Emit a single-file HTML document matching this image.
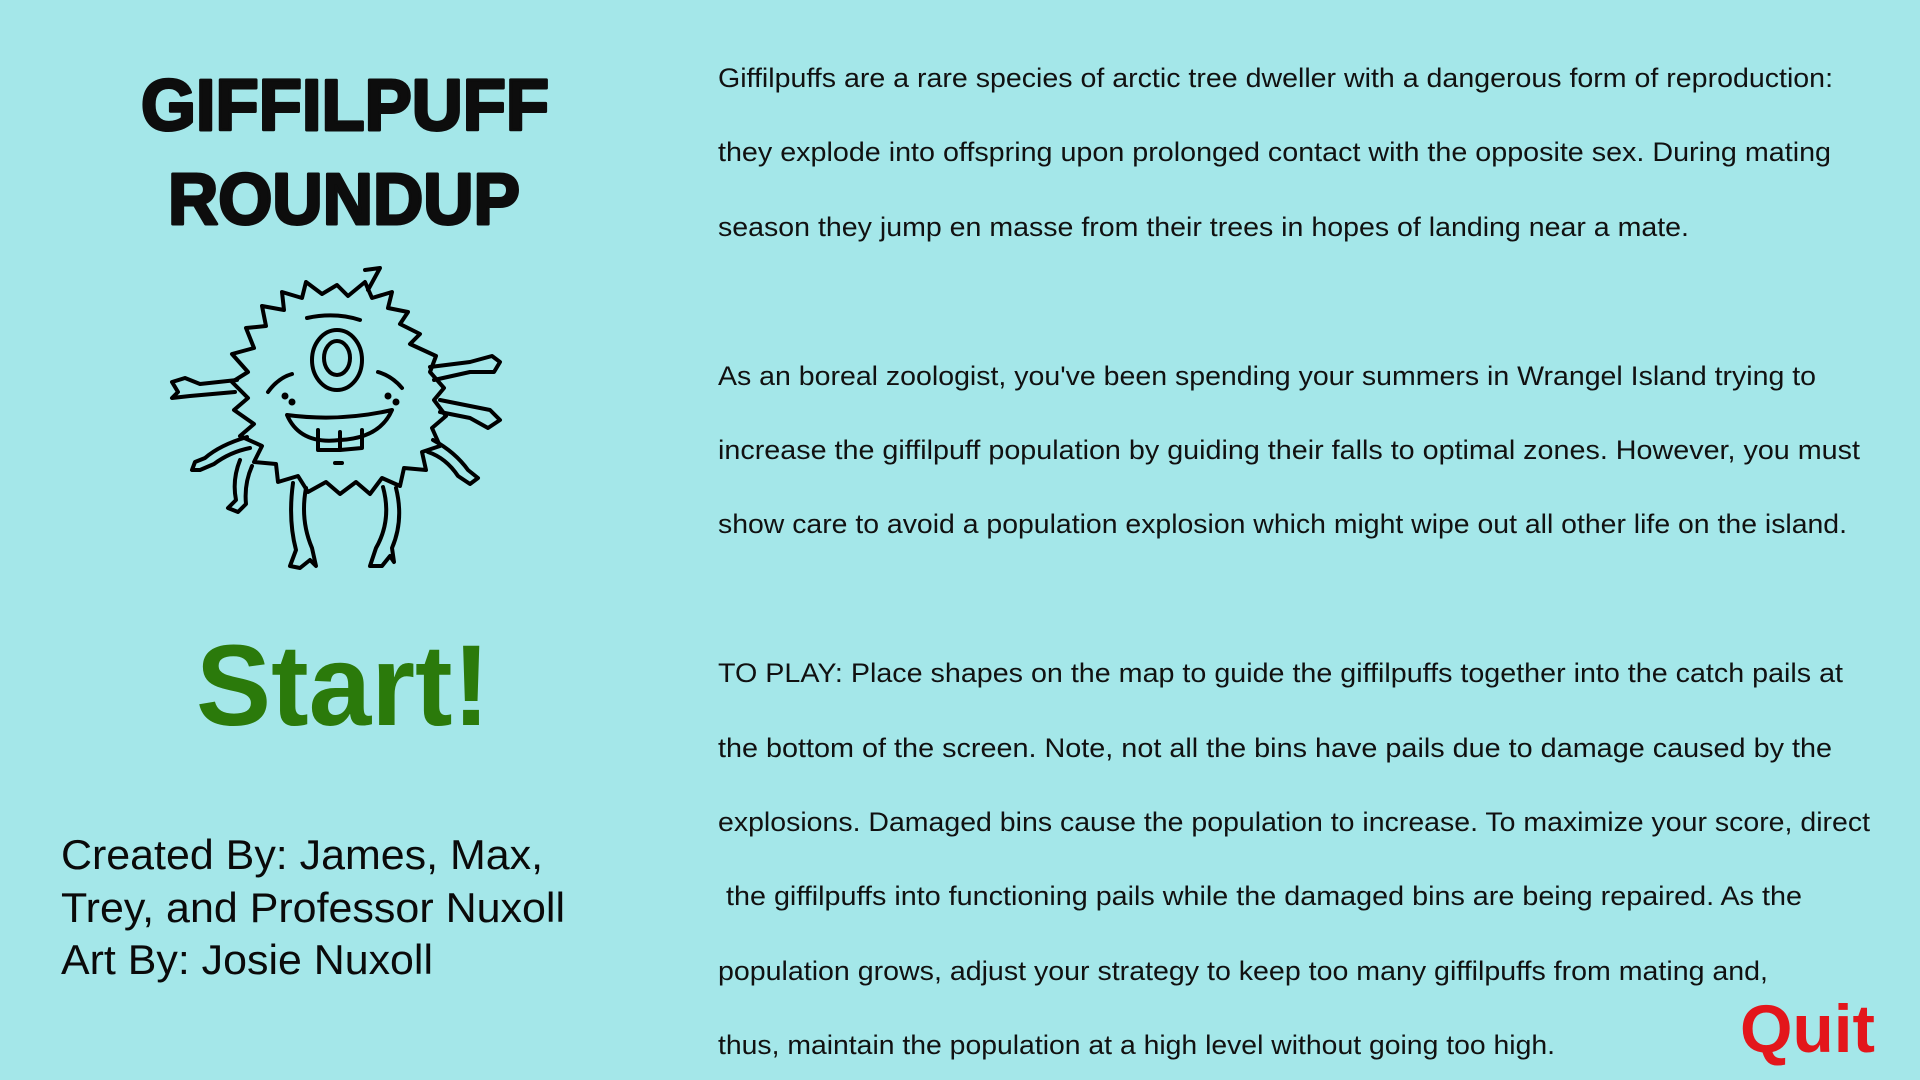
<!DOCTYPE html>
<html><head><meta charset="utf-8"><style>
html,body{margin:0;padding:0;width:1920px;height:1080px;overflow:hidden;background:#a4e7e9}
svg{display:block}
</style></head><body>
<svg width="1920" height="1080" viewBox="0 0 1920 1080" xmlns="http://www.w3.org/2000/svg">
<rect width="1920" height="1080" fill="#a4e7e9"/>
<g font-family="'Liberation Sans', sans-serif" font-weight="900" fill="#0d0d0d" font-size="72" stroke="#0d0d0d" stroke-width="3" stroke-linejoin="round">
<text x="141" y="130" textLength="408" lengthAdjust="spacingAndGlyphs">GIFFILPUFF</text>
<text x="168" y="224" textLength="352" lengthAdjust="spacingAndGlyphs">ROUNDUP</text>
</g>
<g fill="none" stroke="#000" stroke-width="4" stroke-linecap="round" stroke-linejoin="round">
<path d="M337 285 L348 296 L365 282 L372 298 L392 292 L388 308 L408 312 L400 324 L420 334 L410 344 L436 356 L430 372 L444 388 L434 400 L446 416 L432 428 L440 446 L422 452 L426 470 L404 468 L400 486 L382 478 L370 494 L356 482 L340 494 L326 482 L308 492 L298 476 L278 482 L276 464 L254 462 L262 446 L240 436 L254 424 L234 410 L248 398 L232 382 L248 372 L232 354 L254 348 L246 328 L266 326 L262 306 L284 310 L282 292 L302 298 L306 282 L322 294 Z"/>
<path d="M365 270 L380 268 L368 290"/>
<ellipse cx="337" cy="360" rx="25" ry="30"/>
<ellipse cx="337" cy="358" rx="13" ry="17"/>
<path d="M307 318 Q335 312 360 320"/>
<path d="M268 392 Q278 378 292 374"/><path d="M378 372 Q392 376 402 388"/>
<path d="M287 415 Q300 445 340 440 Q380 438 392 410 Q340 422 287 415 Z"/>
<path d="M318 430 L318 450 L340 450 L340 432 M340 450 L362 448 L362 430"/>
<path d="M237 380 L200 384 L185 378 L172 382 L178 392 L172 398 L190 396 L235 392"/>
<path d="M430 367 L470 362 L492 356 L500 362 L494 372 L470 372 L434 380"/>
<path d="M440 400 L470 406 L490 410 L500 420 L488 428 L470 418 L440 412"/>
<path d="M247 437 Q220 445 205 458 L195 462 L192 470 L200 470 L214 464 Q230 452 250 448"/>
<path d="M433 440 Q455 452 468 470 L478 478 L470 484 L458 476 Q446 458 428 452"/>
<path d="M240 460 Q232 480 236 500 L228 508 L238 512 L246 504 Q244 484 252 466"/>
<path d="M293 483 Q288 520 296 550 L290 566 L300 568 L310 560 L316 566 L312 548 Q300 520 306 488"/>
<path d="M383 487 Q392 520 376 548 L370 566 L382 566 L390 556 L394 562 L392 548 Q404 520 396 488"/>
<circle cx="285" cy="396" r="1.5" fill="#000"/><circle cx="292" cy="402" r="1.5" fill="#000"/><circle cx="388" cy="396" r="1.5" fill="#000"/><circle cx="396" cy="402" r="1.5" fill="#000"/>
<path d="M335 463 L342 463"/>
</g>
<text x="196" y="725" font-family="'Liberation Sans', sans-serif" font-weight="700" font-size="115" fill="#2b7a0b" textLength="294" lengthAdjust="spacingAndGlyphs">Start!</text>
<g font-family="'Liberation Sans', sans-serif" font-size="42" fill="#0a0a0a">
<text x="61" y="869" textLength="482" lengthAdjust="spacingAndGlyphs">Created By: James, Max,</text>
<text x="61" y="922" textLength="504" lengthAdjust="spacingAndGlyphs">Trey, and Professor Nuxoll</text>
<text x="61" y="974" textLength="372" lengthAdjust="spacingAndGlyphs">Art By: Josie Nuxoll</text>
</g>
<g font-family="'Liberation Sans', sans-serif" font-size="27" fill="#111">
<text x="718" y="87" textLength="1115" lengthAdjust="spacingAndGlyphs">Giffilpuffs are a rare species of arctic tree dweller with a dangerous form of reproduction:</text>
<text x="718" y="161" textLength="1113" lengthAdjust="spacingAndGlyphs">they explode into offspring upon prolonged contact with the opposite sex.  During mating</text>
<text x="718" y="236" textLength="971" lengthAdjust="spacingAndGlyphs">season they jump en masse from their trees in hopes of landing near a mate.</text>
<text x="718" y="385" textLength="1098" lengthAdjust="spacingAndGlyphs">As an boreal zoologist, you've been spending your summers in Wrangel Island trying to</text>
<text x="718" y="459" textLength="1142" lengthAdjust="spacingAndGlyphs">increase the giffilpuff population by guiding their falls to optimal zones.  However, you must</text>
<text x="718" y="533" textLength="1129" lengthAdjust="spacingAndGlyphs">show care to avoid a population explosion which might wipe out all other life on the island.</text>
<text x="718" y="682" textLength="1125" lengthAdjust="spacingAndGlyphs">TO PLAY: Place shapes on the map to guide the giffilpuffs together into the catch pails at</text>
<text x="718" y="757" textLength="1114" lengthAdjust="spacingAndGlyphs">the bottom of the screen.  Note, not all the bins have pails due to damage caused by the</text>
<text x="718" y="831" textLength="1152" lengthAdjust="spacingAndGlyphs">explosions. Damaged bins cause the population to increase. To maximize your score, direct</text>
<text x="726" y="905" textLength="1076" lengthAdjust="spacingAndGlyphs">the giffilpuffs into functioning pails while the damaged bins are being repaired.  As the</text>
<text x="718" y="980" textLength="1050" lengthAdjust="spacingAndGlyphs">population grows, adjust your strategy to keep too many giffilpuffs from mating and,</text>
<text x="718" y="1054" textLength="837" lengthAdjust="spacingAndGlyphs">thus, maintain the population at a high level without going too high.</text>
</g>
<text x="1740" y="1052" font-family="'Liberation Sans', sans-serif" font-weight="700" font-size="68" fill="#e3161b" textLength="135" lengthAdjust="spacingAndGlyphs">Quit</text>
</svg>
</body></html>
